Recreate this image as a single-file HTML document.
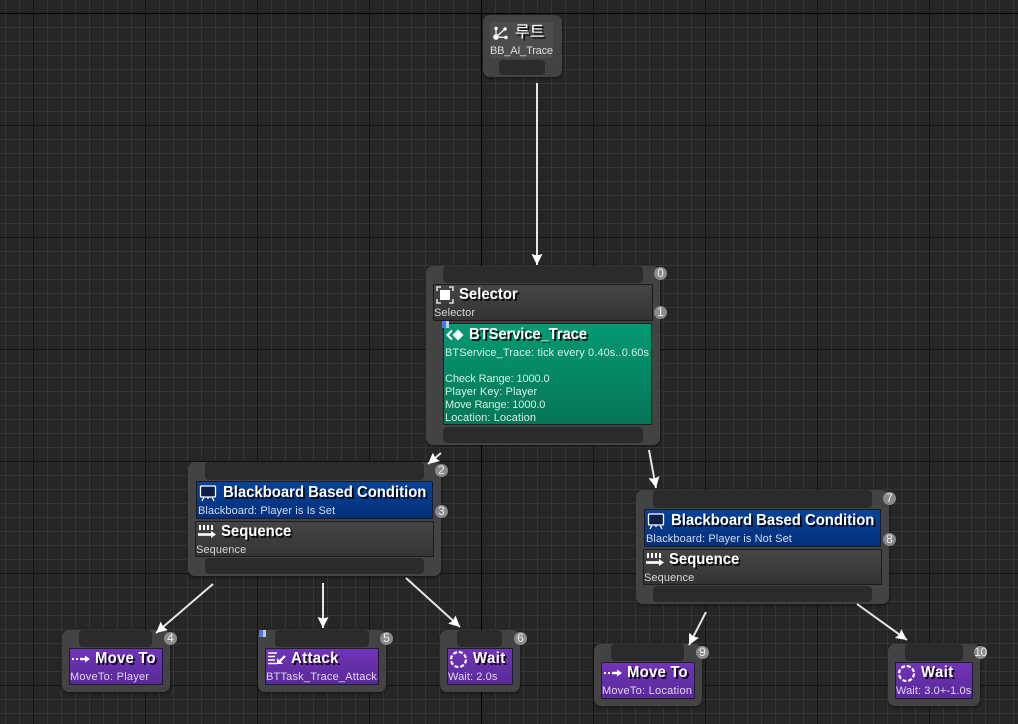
<!DOCTYPE html>
<html><head><meta charset="utf-8">
<style>
html,body{margin:0;padding:0;width:1018px;height:724px;overflow:hidden;background:#262626}
body{position:relative;font-family:"Liberation Sans","Noto Sans CJK KR",sans-serif;
background-color:#262626;
background-image:
linear-gradient(90deg,#000 1px,transparent 1px),
linear-gradient(#000 1px,transparent 1px),
linear-gradient(90deg,#141414 1px,transparent 1px),
linear-gradient(#141414 1px,transparent 1px),
linear-gradient(90deg,#353535 1px,transparent 1px),
linear-gradient(#353535 1px,transparent 1px);
background-size:1px 724px,1018px 2px,112px 724px,1018px 112px,14px 724px,1018px 14px;
background-position:481px 0,0 13px,33px 0,0 13px,5px 0,0 13px;
background-repeat:no-repeat,no-repeat,repeat-x,repeat-y,repeat-x,repeat-y}
.a{position:absolute;box-sizing:border-box}
.n{background:#434343;border-radius:7px;box-shadow:0 1px 3px rgba(0,0,0,.5)}
.b{background:#2b2b2b;border-radius:4px}
.g{background:linear-gradient(#454545,#343434);border:1px solid #1c1c1c;border-radius:1px}
.blue{background:linear-gradient(#07439a,#042f78);border:1px solid #1a1a2a;border-radius:1px}
.green{background:linear-gradient(#049a72,#067657);border:1px solid #15251f;border-radius:1px}
.purple{background:linear-gradient(#7034b8,#5a2a98);border:1px solid #1d1d2d;border-radius:1px}
.t{position:absolute;white-space:nowrap;color:#fff;font-weight:bold;font-size:16px;line-height:18px;margin-top:1px;transform:scaleX(.93);transform-origin:0 50%;text-shadow:2px 2px 0 rgba(0,0,0,.85)}
.k{position:absolute;white-space:nowrap;color:#fff;font-size:16px;line-height:18px;margin-top:1px;text-shadow:2px 2px 0 rgba(0,0,0,.85)}
.s{position:absolute;white-space:nowrap;color:#d6d6d6;font-size:11px;line-height:13px;letter-spacing:.1px;margin-top:2px}
.c{position:absolute;width:13px;height:13px;border-radius:50%;background:#8a8a8a;color:#ececec;font-size:12px;line-height:13px;text-align:center;box-sizing:border-box}
.q{position:absolute;width:7px;height:7px;background:linear-gradient(90deg,#4a78e8 60%,#b8ccf4 60%)}
svg{position:absolute;overflow:visible}
</style></head><body>

<!-- Root -->
<div class="a n" style="left:483px;top:15px;width:79px;height:62px"></div>
<div class="a" style="left:490px;top:22px;width:63px;height:36px;background:#4c4c4c"></div>
<div class="a b" style="left:499px;top:60px;width:46px;height:15px"></div>
<svg style="left:492px;top:24px" width="18" height="18" viewBox="0 0 18 18"><g stroke="#fff" stroke-width="1.2" fill="#fff"><path d="M4 13L4 4.5M4 13L13 5M4 13L14 13.5" fill="none"/><circle cx="4" cy="13" r="2.2"/><circle cx="4" cy="4.5" r="1.1"/><circle cx="13" cy="5" r="1.1"/><circle cx="14" cy="13.5" r="1.1"/></g></svg>
<div class="k" style="left:515px;top:23px">루트</div>
<div class="s" style="left:490px;top:43px;color:#ddd;letter-spacing:-.2px">BB_AI_Trace</div>

<!-- Selector -->
<div class="a n" style="left:426px;top:266px;width:234px;height:179px"></div>
<div class="a b" style="left:443px;top:266px;width:200px;height:17px"></div>
<div class="a g" style="left:433px;top:284px;width:220px;height:37px"></div>
<svg style="left:436px;top:286px" width="18" height="18" viewBox="0 0 18 18"><path d="M1 5V1H5M13 1H17V5M17 13V17H13M5 17H1V13" fill="none" stroke="#ddd" stroke-width="1.6"/><rect x="4" y="4" width="10" height="10" fill="#fff"/></svg>
<div class="t" style="left:459px;top:285px">Selector</div>
<div class="s" style="left:434px;top:305px">Selector</div>
<div class="a green" style="left:443px;top:323px;width:209px;height:102px"></div>
<div class="q" style="left:442px;top:321px"></div>
<svg style="left:446px;top:328px" width="18" height="14" viewBox="0 0 18 14"><path d="M6 2.5L1.5 7L6 11.5" fill="none" stroke="#fff" stroke-width="2"/><path d="M12 1.5L17.5 7L12 12.5L6.5 7Z" fill="#fff"/></svg>
<div class="t" style="left:469px;top:325px;letter-spacing:-.15px">BTService_Trace</div>
<div class="s" style="left:445px;top:345px;color:#d8eee6">BTService_Trace: tick every 0.40s..0.60s</div>
<div class="s" style="left:445px;top:371px;color:#d8eee6;letter-spacing:-.1px">Check Range: 1000.0</div>
<div class="s" style="left:445px;top:384px;color:#d8eee6">Player Key: Player</div>
<div class="s" style="left:445px;top:397px;color:#d8eee6;letter-spacing:-.1px">Move Range: 1000.0</div>
<div class="s" style="left:445px;top:410px;color:#d8eee6">Location: Location</div>
<div class="a b" style="left:443px;top:427px;width:200px;height:16px"></div>
<div class="c" style="left:654px;top:267px">0</div>
<div class="c" style="left:654px;top:306px">1</div>

<!-- Left BB -->
<div class="a n" style="left:188px;top:462px;width:253px;height:114px"></div>
<div class="a b" style="left:205px;top:462px;width:219px;height:18px"></div>
<div class="a blue" style="left:196px;top:481px;width:237px;height:38px"></div>
<svg style="left:199px;top:484px" width="18" height="18" viewBox="0 0 18 18"><rect x="1.5" y="2" width="15" height="11" rx="1" fill="#0f1f45" stroke="#fff" stroke-width="1.3"/><path d="M5 13L3 17M13 13L15 17M9 13V15" stroke="#fff" stroke-width="1.3"/></svg>
<div class="t" style="left:223px;top:483px">Blackboard Based Condition</div>
<div class="s" style="left:198px;top:503px;color:#d4dff0">Blackboard: Player is Is Set</div>
<div class="a g" style="left:195px;top:521px;width:239px;height:36px"></div>
<svg style="left:198px;top:524px" width="18" height="16" viewBox="0 0 18 16"><path d="M2 1V6M6 1V6M10 1V6M14 1V6" stroke="#fff" stroke-width="2"/><path d="M0 10.5H14" stroke="#fff" stroke-width="2.6"/><path d="M13 7L18 10.5L13 14Z" fill="#fff"/></svg>
<div class="t" style="left:221px;top:522px">Sequence</div>
<div class="s" style="left:196px;top:542px">Sequence</div>
<div class="a b" style="left:205px;top:558px;width:219px;height:16px"></div>
<div class="c" style="left:435px;top:464px">2</div>
<div class="c" style="left:435px;top:505px">3</div>

<!-- Right BB -->
<div class="a n" style="left:636px;top:490px;width:253px;height:114px"></div>
<div class="a b" style="left:653px;top:490px;width:219px;height:18px"></div>
<div class="a blue" style="left:644px;top:509px;width:237px;height:38px"></div>
<svg style="left:647px;top:512px" width="18" height="18" viewBox="0 0 18 18"><rect x="1.5" y="2" width="15" height="11" rx="1" fill="#0f1f45" stroke="#fff" stroke-width="1.3"/><path d="M5 13L3 17M13 13L15 17M9 13V15" stroke="#fff" stroke-width="1.3"/></svg>
<div class="t" style="left:671px;top:511px">Blackboard Based Condition</div>
<div class="s" style="left:646px;top:531px;color:#d4dff0">Blackboard: Player is Not Set</div>
<div class="a g" style="left:643px;top:549px;width:239px;height:36px"></div>
<svg style="left:646px;top:552px" width="18" height="16" viewBox="0 0 18 16"><path d="M2 1V6M6 1V6M10 1V6M14 1V6" stroke="#fff" stroke-width="2"/><path d="M0 10.5H14" stroke="#fff" stroke-width="2.6"/><path d="M13 7L18 10.5L13 14Z" fill="#fff"/></svg>
<div class="t" style="left:669px;top:550px">Sequence</div>
<div class="s" style="left:644px;top:570px">Sequence</div>
<div class="a b" style="left:653px;top:586px;width:219px;height:16px"></div>
<div class="c" style="left:883px;top:492px">7</div>
<div class="c" style="left:883px;top:533px">8</div>

<!-- Move To 1 -->
<div class="a n" style="left:62px;top:630px;width:108px;height:62px"></div>
<div class="a b" style="left:79px;top:630px;width:73px;height:17px"></div>
<div class="a purple" style="left:69px;top:648px;width:94px;height:37px"></div>
<svg style="left:71px;top:654px" width="20" height="10" viewBox="0 0 20 10"><path d="M1 5H3M5 5H7" stroke="#fff" stroke-width="2"/><path d="M9 5H15" stroke="#fff" stroke-width="2.4"/><path d="M14 1.5L19 5L14 8.5Z" fill="#fff"/></svg>
<div class="t" style="left:95px;top:649px;letter-spacing:.25px">Move To</div>
<div class="s" style="left:70px;top:669px;color:#e0d4f0;letter-spacing:.25px">MoveTo: Player</div>
<div class="c" style="left:164px;top:632px">4</div>

<!-- Attack -->
<div class="a n" style="left:258px;top:630px;width:128px;height:62px"></div>
<div class="a b" style="left:275px;top:630px;width:94px;height:17px"></div>
<div class="a purple" style="left:265px;top:648px;width:114px;height:37px"></div>
<div class="q" style="left:259px;top:630px"></div>
<svg style="left:267px;top:651px" width="20" height="16" viewBox="0 0 20 16"><path d="M1 2H10M1 5.5H8M1 9H8M1 12.5H10" stroke="#fff" stroke-width="1.6"/><path d="M18 5L12 11" stroke="#fff" stroke-width="2.2"/><path d="M10 7V13H16Z" fill="#fff"/></svg>
<div class="t" style="left:291px;top:649px;letter-spacing:.4px">Attack</div>
<div class="s" style="left:266px;top:669px;color:#e0d4f0;letter-spacing:.2px">BTTask_Trace_Attack</div>
<div class="c" style="left:380px;top:632px">5</div>

<!-- Wait 1 -->
<div class="a n" style="left:440px;top:630px;width:80px;height:62px"></div>
<div class="a b" style="left:457px;top:630px;width:45px;height:17px"></div>
<div class="a purple" style="left:447px;top:648px;width:66px;height:37px"></div>
<svg style="left:449px;top:650px" width="19" height="19" viewBox="0 0 19 19"><circle cx="9.5" cy="9.5" r="7.5" fill="none" stroke="#fff" stroke-width="2.2" stroke-dasharray="4 1.9"/></svg>
<div class="t" style="left:473px;top:649px;letter-spacing:.5px">Wait</div>
<div class="s" style="left:448px;top:669px;color:#e0d4f0">Wait: 2.0s</div>
<div class="c" style="left:514px;top:632px">6</div>

<!-- Move To 2 -->
<div class="a n" style="left:594px;top:644px;width:108px;height:62px"></div>
<div class="a b" style="left:611px;top:644px;width:73px;height:17px"></div>
<div class="a purple" style="left:601px;top:662px;width:94px;height:37px"></div>
<svg style="left:603px;top:668px" width="20" height="10" viewBox="0 0 20 10"><path d="M1 5H3M5 5H7" stroke="#fff" stroke-width="2"/><path d="M9 5H15" stroke="#fff" stroke-width="2.4"/><path d="M14 1.5L19 5L14 8.5Z" fill="#fff"/></svg>
<div class="t" style="left:627px;top:663px;letter-spacing:.25px">Move To</div>
<div class="s" style="left:602px;top:683px;color:#e0d4f0;letter-spacing:.25px">MoveTo: Location</div>
<div class="c" style="left:696px;top:646px">9</div>

<!-- Wait 2 -->
<div class="a n" style="left:888px;top:644px;width:92px;height:62px"></div>
<div class="a b" style="left:905px;top:644px;width:58px;height:17px"></div>
<div class="a purple" style="left:895px;top:662px;width:78px;height:37px"></div>
<svg style="left:897px;top:664px" width="19" height="19" viewBox="0 0 19 19"><circle cx="9.5" cy="9.5" r="7.5" fill="none" stroke="#fff" stroke-width="2.2" stroke-dasharray="4 1.9"/></svg>
<div class="t" style="left:921px;top:663px;letter-spacing:.5px">Wait</div>
<div class="s" style="left:896px;top:683px;color:#e0d4f0">Wait: 3.0+-1.0s</div>
<div class="c" style="left:974px;top:646px;letter-spacing:-.5px">10</div>

<!-- Arrows -->
<svg style="left:0;top:0" width="1018" height="724" viewBox="0 0 1018 724">
<defs><marker id="h" markerWidth="12" markerHeight="11" refX="11" refY="5.5" orient="auto" markerUnits="userSpaceOnUse"><path d="M0 0L11 5.5L0 11L1.5 5.5Z" fill="#fff"/></marker></defs>
<g stroke="#e6e6e6" stroke-width="2" fill="none">
<path d="M537 83L537 265" marker-end="url(#h)"/>
<path d="M441 453L428 464" marker-end="url(#h)"/>
<path d="M649 450L656 488" marker-end="url(#h)"/>
<path d="M213 584L156 633" marker-end="url(#h)"/>
<path d="M323 583L323 628" marker-end="url(#h)"/>
<path d="M406 578L460 627" marker-end="url(#h)"/>
<path d="M706 612L689 645" marker-end="url(#h)"/>
<path d="M857 604L907 640" marker-end="url(#h)"/>
</g></svg>
</body></html>
